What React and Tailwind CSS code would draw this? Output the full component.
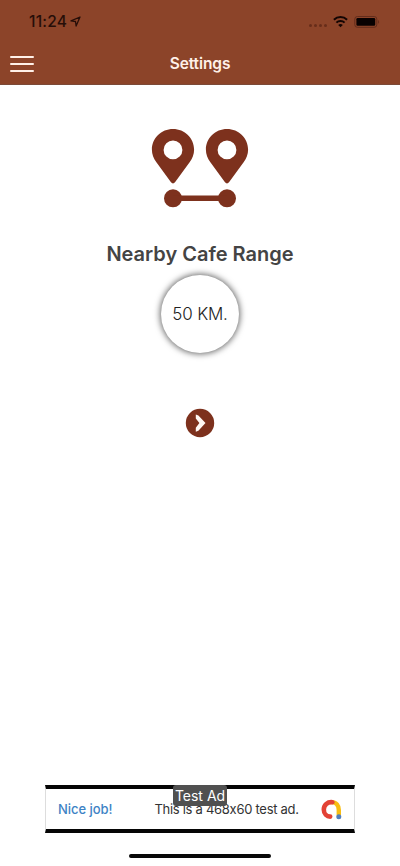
import React from 'react';

function App() {
  return (
    <div className="flex h-[866px] w-[400px] flex-col overflow-hidden bg-white font-['Inter',sans-serif]">
      <header className="h-[85px] shrink-0 border-b border-[#7c4a38] bg-[#8c4429]">
        <StatusBar />
        <div className="grid h-[43px] grid-cols-[1fr_auto_1fr] items-center px-[10px]">
          <button aria-label="Menu" className="flex w-[24px] flex-col gap-[5px]">
            <span className="h-[2px] rounded-full bg-[#fff1e8]" />
            <span className="h-[2px] rounded-full bg-[#fff1e8]" />
            <span className="h-[2px] rounded-full bg-[#fff1e8]" />
          </button>
          <h1 className="pt-px text-[15.5px] font-semibold tracking-[-0.1px] text-[#fff1e8]">Settings</h1>
        </div>
      </header>

      <main className="flex flex-1 flex-col items-center pt-[43px]">
        <RangeIcon />
        <h2 className="mt-[32px] text-[20px] leading-[28px] font-semibold whitespace-nowrap text-[#444444]">Nearby Cafe Range</h2>
        <div className="mt-[7px] flex size-[78px] items-center justify-center rounded-full bg-white shadow-[0_0_6px_1px_rgba(0,0,0,0.6)]">
          <span className="pt-[2px] text-[17px] font-light tracking-[-0.2px] text-[#222222]">50 KM.</span>
        </div>
        <button aria-label="Next" className="mt-[55px]">
          <svg width="30" height="30" viewBox="0 0 30 30">
            <circle cx="15" cy="15" r="14.2" fill="#7d311d" />
            <path d="M10.8 6.4 L13.4 7.4 L20.5 15 L13.4 22.8 L10.8 23.8 V19.8 L14.4 15 L10.8 10.4 Z" fill="#fff8f4" />
          </svg>
        </button>
      </main>

      <AdBanner />
      <div className="mt-[21px] mb-[8px] ml-[129px] h-[4px] w-[142px] shrink-0 rounded-full bg-[#080808]" />
    </div>
  );
}

function StatusBar() {
  return (
    <div className="flex h-[42px] items-center pt-px pr-[20px] pl-[29px] text-[#260e08]">
      <span className="pt-px text-[15.5px] leading-[20px] font-medium tracking-[0.2px]">11:24</span>
      <svg className="ml-[3px]" width="11" height="11" viewBox="0 0 11 11" fill="none">
        <path d="M10 1 L1 4.9 L5.5 5.5 L6.1 10 Z" stroke="currentColor" strokeWidth="1.3" strokeLinejoin="round" />
      </svg>
      <div className="mt-[8px] ml-auto flex gap-[2px]">
        <span className="size-[3px] rounded-full bg-[#672d1a]" />
        <span className="size-[3px] rounded-full bg-[#672d1a]" />
        <span className="size-[3px] rounded-full bg-[#672d1a]" />
        <span className="size-[3px] rounded-full bg-[#672d1a]" />
      </div>
      <svg className="ml-[5px]" width="17" height="13" viewBox="0 0 17 13" fill="none" stroke="#130503">
        <path d="M1.9 4.7 C5.6 1 11.4 1 15.1 4.7" strokeWidth="2" />
        <path d="M4.4 7.6 C6.6 5.4 10.4 5.4 12.6 7.6" strokeWidth="2" />
        <path d="M8.5 12.2 L6.2 9.9 C7.5 8.7 9.5 8.7 10.8 9.9 Z" fill="#130503" stroke="none" />
      </svg>
      <svg className="ml-[5px]" width="26" height="12" viewBox="0 0 26 12">
        <rect x="0.8" y="0.5" width="22" height="10.8" rx="2.6" fill="none" stroke="#632d1c" />
        <rect x="2.4" y="2.1" width="18.8" height="7.6" rx="1.2" fill="#080101" />
        <path d="M24.2 4 C25.4 4.5 25.4 7.3 24.2 7.8 Z" fill="#632d1c" />
      </svg>
    </div>
  );
}

function RangeIcon() {
  return (
    <svg width="98" height="80" viewBox="0 0 98 80" fill="#7d311d">
      <Pin x={22} />
      <Pin x={76} />
      <circle cx="22" cy="70.3" r="9" />
      <circle cx="76" cy="70.3" r="9" />
      <path d="M22 67.5 H76 V73.1 H22 Z" />
    </svg>
  );
}

function Pin({ x }) {
  return (
    <path
      transform={`translate(${x} 0)`}
      fillRule="evenodd"
      d="M0 1 C-11.7 1 -21.1 10.2 -21.1 21.7 C-21.1 26.3 -19.4 30.2 -16.8 34 L-2.2 54 Q0 56.8 2.2 54 L16.8 34 C19.4 30.2 21.1 26.3 21.1 21.7 C21.1 10.2 11.7 1 0 1 Z M0 12.5 A9.4 9.4 0 1 1 0 31.3 A9.4 9.4 0 1 1 0 12.5 Z"
    />
  );
}

function AdBanner() {
  return (
    <div className="relative mr-auto ml-[45px] flex h-[48px] w-[310px] shrink-0 items-center border-x border-y-4 border-x-[#dddddd] border-y-[#050505] bg-white px-[12px] text-[13px]">
      <span className="pt-px font-medium tracking-[-0.05px] text-[#3d83c5]">Nice job!</span>
      <span className="ml-[42px] pt-px tracking-[-0.28px] whitespace-nowrap text-[#333333]">This is a 468x60 test ad.</span>
      <svg className="ml-auto" width="21" height="21" viewBox="0 0 21 21" fill="none">
        <path d="M10.4 3.1 C15.4 3.1 17.8 6.6 17.8 11 V16.5" stroke="#f8bd12" strokeWidth="4.4" />
        <path d="M11.4 3.2 C6.5 2.6 2.8 6.1 2.8 10.6 C2.8 14.9 5.8 17.6 9.2 17.6" stroke="#e34235" strokeWidth="4.6" strokeLinecap="round" />
        <circle cx="17.8" cy="17.7" r="2.5" fill="#527fbd" />
      </svg>
      <span className="absolute top-[-4px] left-[127px] flex h-[21px] w-[54px] items-center justify-center rounded-[3px] bg-[#505050] text-[14px] whitespace-nowrap text-white">Test Ad</span>
    </div>
  );
}

export default App;
